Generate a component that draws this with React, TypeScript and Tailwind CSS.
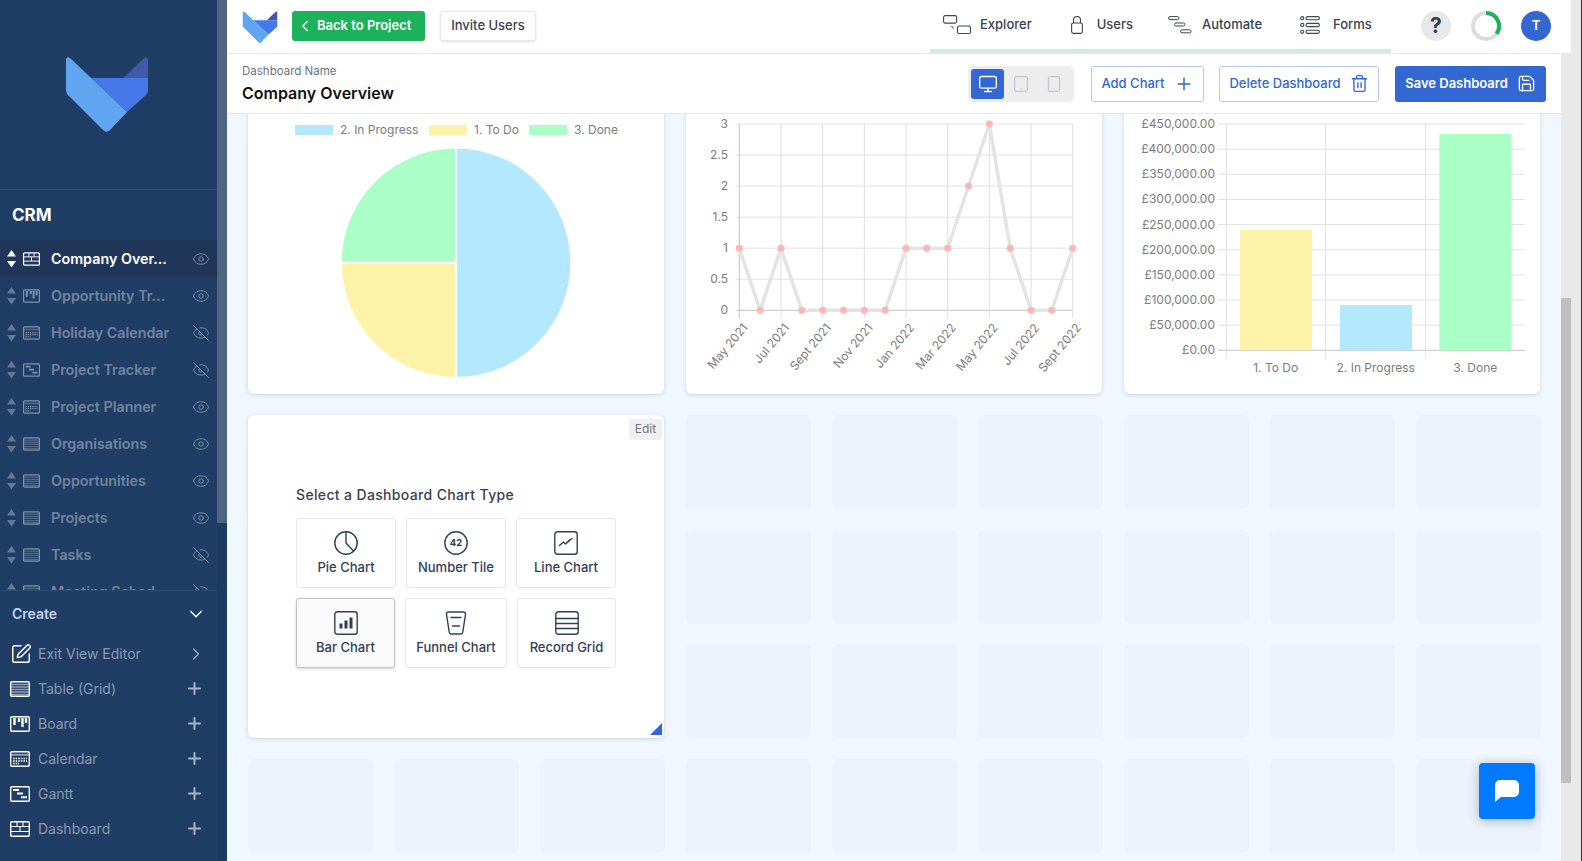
import { ChevronDown, ChevronLeft, ChevronRight, Eye, EyeOff, Monitor, Plus, Save, SquarePen, Trash2 } from "lucide-react";

function Logo({ className }: { className: string }) {
  return (
    <svg viewBox="0 0 82 76" className={className}>
      <path d="M57 22 L77 3 Q82 -1 82 4 L82 22 Z" fill="#3f5aa8" />
      <path d="M25 22 L82 22 L82 34 Q82 37 80 39 L61 56 Z" fill="#4678ea" />
      <path d="M0 4 Q0 0 4 2 L61 56 L45 73 Q41 78 37 74 L2 39 Q0 37 0 34 Z" fill="#60a5f0" />
    </svg>
  );
}

type ViewKind = "dashboard" | "board" | "calendar" | "gantt" | "table";

function ViewIcon({ kind, className }: { kind: ViewKind; className: string }) {
  return (
    <svg viewBox="0 0 20 16" className={className} fill="none" stroke="currentColor">
      <rect x="0.7" y="0.7" width="18.6" height="14.6" rx="1.2" strokeWidth="1.4" />
      {kind === "dashboard" && <path d="M1 5.500h18M7 1v4.500M13 1v4.500M1 10.500h18M10 5.500v5" strokeWidth="1.1" />}
      {kind === "board" && <path d="M4.500 2v7M9 2v4M12.500 2v9M16 2v5" strokeWidth="2.400" />}
      {kind === "calendar" && (
        <>
          <path d="M1 3.800h18" strokeWidth="2" opacity="0.5" />
          <path d="M3 7.500h14M3 10h14" strokeWidth="1.400" strokeDasharray="1.600 1" />
          <path d="M3 12.500h6" strokeWidth="1.400" strokeDasharray="1.600 1" />
        </>
      )}
      {kind === "gantt" && <path d="M3 4h6M7 7.600h6M11 11.200h6" strokeWidth="2" />}
      {kind === "table" && <path d="M1 3.500h18M1 6h18M1 8.500h18M1 11h18M1 13.500h18" strokeWidth="1.400" opacity="0.5" />}
    </svg>
  );
}

function SortArrows({ active }: { active: boolean }) {
  return (
    <svg viewBox="0 0 9 18" className={`w-[9px] h-[18px] ${active ? "text-white" : "text-[#64799a]"}`} fill="currentColor">
      <path d="M4.500 0 L9 6.500 L0 6.500 Z" />
      <path d="M0 11 L9 11 L4.500 17.500 Z" />
    </svg>
  );
}

const views: { name: string; kind: ViewKind; hidden?: boolean }[] = [
  { name: "Company Over...", kind: "dashboard" },
  { name: "Opportunity Tr...", kind: "board" },
  { name: "Holiday Calendar", kind: "calendar", hidden: true },
  { name: "Project Tracker", kind: "gantt", hidden: true },
  { name: "Project Planner", kind: "calendar" },
  { name: "Organisations", kind: "table" },
  { name: "Opportunities", kind: "table" },
  { name: "Projects", kind: "table" },
  { name: "Tasks", kind: "table", hidden: true },
  { name: "Meeting Sched...", kind: "calendar", hidden: true },
];

const createItems: { name: string; kind: ViewKind }[] = [
  { name: "Table (Grid)", kind: "table" },
  { name: "Board", kind: "board" },
  { name: "Calendar", kind: "calendar" },
  { name: "Gantt", kind: "gantt" },
  { name: "Dashboard", kind: "dashboard" },
];

function Sidebar() {
  return (
    <aside className="w-[227px] h-full shrink-0 flex bg-[#203e65]">
      <div className="w-[217px] h-full flex flex-col">
        <div className="h-[590px] shrink-0 overflow-hidden">
          <div className="h-[190px] pl-[66px] pt-[56px] border-b border-[#2c4a74]">
            <Logo className="w-[82px] h-[76px]" />
          </div>
          <div className="h-[50px] flex items-center pl-[12px] pt-[2px] text-[17px] font-bold text-white">CRM</div>
          {views.map((v, i) => {
            const active = i === 0;
            const Vis = v.hidden ? EyeOff : Eye;
            return (
              <div key={v.name} className={`h-[37px] flex items-center pl-[7px] pr-[7px] ${active ? "bg-[#1f3658]" : ""}`}>
                <SortArrows active={active} />
                <ViewIcon kind={v.kind} className={`ml-[7px] w-[17px] h-[14px] ${active ? "text-white" : "text-[#8093ad]"}`} />
                <span className={`ml-[11px] whitespace-nowrap text-[14.300px] font-semibold ${active ? "text-white" : "text-[#71849f]"}`}>{v.name}</span>
                <Vis strokeWidth={1.200} className="ml-auto w-[18px] h-[18px] text-[#8093ad]" />
              </div>
            );
          })}
        </div>
        <div className="flex-1 border-t border-[#2c4a74]">
          <div className="h-[45px] flex items-center pl-[12px] pr-[10px] justify-between text-[14px] font-semibold text-[#c2d1e5]">
            Create
            <ChevronDown strokeWidth={1.500} className="w-[22px] h-[22px] text-white" />
          </div>
          <div className="h-[35px] flex items-center pl-[10px] pr-[11px] text-[14px] text-[#8a9ab2]">
            <SquarePen strokeWidth={1.600} className="w-[22px] h-[22px] text-white" />
            <span className="ml-[6px]">Exit View Editor</span>
            <ChevronRight strokeWidth={1.500} className="ml-auto w-[20px] h-[20px] text-[#9fb0c6]" />
          </div>
          {createItems.map((c) => (
            <div key={c.name} className="h-[35px] flex items-center pl-[10px] pr-[13px] text-[14px] text-[#8a9ab2]">
              <ViewIcon kind={c.kind} className="w-[20px] h-[16px] text-white" />
              <span className="ml-[8px]">{c.name}</span>
              <Plus strokeWidth={2.500} className="ml-auto w-[19px] h-[19px] text-[#a5b4c8]" />
            </div>
          ))}
        </div>
      </div>
      <div className="w-[10px] h-full bg-[#1f3a60]">
        <div className="h-[523px] bg-[#4f6682]" />
      </div>
    </aside>
  );
}

function NavIcon({ kind }: { kind: string }) {
  if (kind === "Explorer")
    return (
      <svg viewBox="0 0 28 20" className="w-[28px] h-[20px]" fill="none" stroke="#3b4654" strokeWidth="1.100">
        <rect x="0.6" y="0.6" width="13" height="7.500" rx="1.500" />
        <rect x="14.500" y="11" width="13" height="7.500" rx="1.500" />
        <path d="M8.500 11 l2 2.500" />
      </svg>
    );
  if (kind === "Users")
    return (
      <svg viewBox="0 0 12 18" className="w-[12px] h-[18px]" fill="none" stroke="#3b4654" strokeWidth="1.100">
        <rect x="0.6" y="7" width="10.800" height="10.400" rx="1.800" />
        <path d="M2.500 7V4a3.500 3.500 0 0 1 7 0v3" />
      </svg>
    );
  if (kind === "Automate")
    return (
      <svg viewBox="0 0 24 18" className="w-[24px] h-[18px]" fill="none" stroke="#3b4654" strokeWidth="1">
        <rect x="0.5" y="0.6" width="10.500" height="3" rx="1.500" />
        <rect x="6.500" y="7" width="10.500" height="3" rx="1.500" />
        <rect x="12.500" y="13.800" width="10.500" height="3" rx="1.500" />
      </svg>
    );
  return (
    <svg viewBox="0 0 20 18" className="w-[20px] h-[18px]" fill="none" stroke="#3b4654" strokeWidth="1.100">
      <circle cx="2.200" cy="2.200" r="1.600" />
      <circle cx="2.200" cy="9" r="1.600" />
      <circle cx="2.200" cy="15.800" r="1.600" />
      <rect x="6" y="0.6" width="13.400" height="3.200" rx="1.600" />
      <rect x="6" y="7.400" width="13.400" height="3.200" rx="1.600" />
      <rect x="6" y="14.200" width="13.400" height="3.200" rx="1.600" />
    </svg>
  );
}

function TopBar() {
  return (
    <div className="h-[54px] shrink-0 bg-white border-b border-[#e5e7eb] flex items-center pl-[15px] pr-[20px]">
      <Logo className="w-[36px] h-[32px]" />
      <button className="ml-[14px] -mt-[1px] h-[30px] w-[133px] rounded-[3px] bg-[#1cb25c] text-white text-[13px] font-semibold flex items-center pl-[4px]">
        <ChevronLeft strokeWidth={2} className="w-[18px] h-[18px] mr-[3px]" />
        Back to Project
      </button>
      <button className="ml-[15px] -mt-[1px] h-[30px] w-[96px] rounded-[3px] bg-white border border-[#e5e7eb] shadow-sm text-[13px] font-medium text-[#374151]">Invite Users</button>
      <nav className="ml-[394px] w-[461px] h-[53px] self-start border-b-4 border-[#d1ecdd] flex items-center pl-[13px] text-[13px] font-medium text-[#374151]">
        <NavIcon kind="Explorer" />
        <span className="ml-[9px]">Explorer</span>
        <span className="ml-[39px]"><NavIcon kind="Users" /></span>
        <span className="ml-[14px]">Users</span>
        <span className="ml-[35px]"><NavIcon kind="Automate" /></span>
        <span className="ml-[10px]">Automate</span>
        <span className="ml-[38px]"><NavIcon kind="Forms" /></span>
        <span className="ml-[13px]">Forms</span>
      </nav>
      <div className="ml-[30px] -mt-[1px] w-[30px] h-[30px] rounded-full bg-[#e8e8e8] flex items-center justify-center text-[21px] font-bold text-[#3a3f47]">?</div>
      <svg viewBox="0 0 30 30" className="ml-[20px] -mt-[1px] w-[30px] h-[30px]" fill="none" strokeWidth="4">
        <circle cx="15" cy="15" r="13" stroke="#dcdcdc" />
        <path d="M15 2 A13 13 0 0 1 25.500 22.700" stroke="#1cb25c" />
      </svg>
      <div className="ml-[20px] -mt-[1px] w-[30px] h-[30px] rounded-full bg-[#3367d1] flex items-center justify-center text-[13px] font-semibold text-white">T</div>
    </div>
  );
}

function TabletGlyph({ narrow }: { narrow?: boolean }) {
  return (
    <svg viewBox="0 0 14 16" className="w-[14px] h-[16px]" fill="none" stroke="#c4c8ce" strokeWidth="1.300">
      <rect x={narrow ? 1.500 : 0.7} y="0.7" width={narrow ? 11 : 12.600} height="14.600" rx="1.500" />
      <circle cx="7" cy="12.300" r="0.6" fill="#c4c8ce" stroke="none" />
    </svg>
  );
}

function DashboardBar() {
  return (
    <div className="h-[60px] shrink-0 bg-white border-b border-[#e5e7eb] flex items-center pl-[15px] pr-[15px]">
      <div>
        <div className="text-[11.500px] leading-[16px] text-[#6b7280]">Dashboard Name</div>
        <div className="mt-[3px] text-[16px] leading-[22px] font-semibold text-[#111]">Company Overview</div>
      </div>
      <div className="ml-auto w-[106px] h-[36px] rounded-[6px] bg-[#ededed] flex items-center pl-[3px]">
        <div className="w-[33px] h-[30px] rounded-[3px] bg-[#3367d1] flex items-center justify-center">
          <Monitor strokeWidth={1.600} className="w-[20px] h-[20px] text-white" />
        </div>
        <div className="ml-[10px]"><TabletGlyph /></div>
        <div className="ml-[19px]"><TabletGlyph narrow /></div>
      </div>
      <button className="ml-[17px] w-[113px] h-[36px] rounded-[3px] bg-white border border-[#b7c8f0] flex items-center justify-center gap-[9px] text-[13px] font-medium text-[#3367d1]">
        Add Chart
        <Plus strokeWidth={1.800} className="w-[20px] h-[20px]" />
      </button>
      <button className="ml-[15px] w-[160px] h-[36px] rounded-[3px] bg-white border border-[#b7c8f0] flex items-center justify-center gap-[9px] text-[13px] font-medium text-[#3367d1]">
        Delete Dashboard
        <Trash2 strokeWidth={1.700} className="w-[19px] h-[19px]" />
      </button>
      <button className="ml-[16px] w-[151px] h-[36px] rounded-[3px] bg-[#3367d1] flex items-center justify-center gap-[9px] text-[13px] font-semibold text-white">
        Save Dashboard
        <Save strokeWidth={1.700} className="w-[19px] h-[19px]" />
      </button>
    </div>
  );
}

const tickText = { fontFamily: "Inter, sans-serif", fontSize: 12, fill: "#7c7c7c" };

function PieCard() {
  const legend = [
    { x: 295, c: "#b3e8ff", t: "2. In Progress" },
    { x: 429, c: "#fef3a8", t: "1. To Do" },
    { x: 529, c: "#aaffc7", t: "3. Done" },
  ];
  return (
    <svg viewBox="248 71 416 323" className="w-[416px] h-[323px]">
      {legend.map((l) => (
        <g key={l.t}>
          <rect x={l.x} y="125" width="38" height="10" fill={l.c} />
          <text x={l.x + 45} y="134" {...tickText}>{l.t}</text>
        </g>
      ))}
      <path d="M456 262.700 V147.400 A115.300 115.300 0 0 1 456 378 Z" fill="#b3e8ff" stroke="#fff" strokeWidth="2" />
      <path d="M456 262.700 V378 A115.300 115.300 0 0 1 340.700 262.700 Z" fill="#fef3a8" stroke="#fff" strokeWidth="2" />
      <path d="M456 262.700 H340.700 A115.300 115.300 0 0 1 456 147.400 Z" fill="#aaffc7" stroke="#fff" strokeWidth="2" />
    </svg>
  );
}

function LineCard() {
  const values = [1, 0, 1, 0, 0, 0, 0, 0, 1, 1, 1, 2, 3, 1, 0, 0, 1];
  const x0 = 739.300;
  const step = 20.840;
  const y0 = 310.300;
  const unit = 62.100;
  const xLabels = ["May 2021", "Jul 2021", "Sept 2021", "Nov 2021", "Jan 2022", "Mar 2022", "May 2022", "Jul 2022", "Sept 2022"];
  const yLabels = ["0", "0.5", "1", "1.5", "2", "2.5", "3"];
  const pts = values.map((v, i) => ({ x: x0 + i * step, y: y0 - v * unit }));
  return (
    <svg viewBox="686 71 416 323" className="w-[416px] h-[323px]">
      {yLabels.map((t, i) => {
        const y = y0 - (i * unit) / 2;
        return (
          <g key={t}>
            <line x1={x0 - 3} x2={x0 + 16 * step} y1={y} y2={y} stroke={i === 0 ? "#c4c4c4" : "#e2e2e2"} />
            <text x="728" y={y + 4} textAnchor="end" {...tickText}>{t}</text>
          </g>
        );
      })}
      {xLabels.map((t, i) => {
        const x = x0 + i * 2 * step;
        return (
          <g key={t}>
            <line x1={x} x2={x} y1="124" y2={y0 + 8} stroke={i === 0 ? "#c4c4c4" : "#dedede"} />
            <text x={x + 9} y="328" textAnchor="end" transform={`rotate(-50 ${x + 9} 328)`} {...tickText}>{t}</text>
          </g>
        );
      })}
      <polyline points={pts.map((p) => `${p.x},${p.y}`).join(" ")} fill="none" stroke="#e4e4e4" strokeWidth="3.500" />
      {pts.map((p, i) => (
        <circle key={i} cx={p.x} cy={p.y} r="3.300" fill="#ffb4b4" stroke="#f3c3c3" />
      ))}
    </svg>
  );
}

function BarCard() {
  const yLabels = ["£0.00", "£50,000.00", "£100,000.00", "£150,000.00", "£200,000.00", "£250,000.00", "£300,000.00", "£350,000.00", "£400,000.00", "£450,000.00"];
  const y0 = 350.300;
  const unit = 25.140;
  const bars = [
    { x: 1240, top: 230, c: "#fef3a8", t: "1. To Do", cx: 1275.700, gx: 1226.300 },
    { x: 1340, top: 305, c: "#b3e8ff", t: "2. In Progress", cx: 1375.700, gx: 1325.700 },
    { x: 1439.300, top: 134, c: "#aaffc7", t: "3. Done", cx: 1475.300, gx: 1425.700 },
  ];
  return (
    <svg viewBox="1124 71 416 323" className="w-[416px] h-[323px]">
      {yLabels.map((t, i) => {
        const y = y0 - i * unit;
        return (
          <g key={t}>
            <line x1="1218" x2="1525" y1={y} y2={y} stroke={i === 0 ? "#c4c4c4" : "#e2e2e2"} />
            <text x="1215" y={y + 4} textAnchor="end" {...tickText}>{t}</text>
          </g>
        );
      })}
      {bars.map((b) => (
        <g key={b.t}>
          <line x1={b.gx} x2={b.gx} y1="124" y2="358" stroke="#e0e0e0" />
          <rect x={b.x} y={b.top} width="72" height={y0 - b.top} fill={b.c} />
          <text x={b.cx} y="372" textAnchor="middle" {...tickText}>{b.t}</text>
        </g>
      ))}
    </svg>
  );
}

function ChartGlyph({ kind }: { kind: string }) {
  return (
    <svg viewBox="0 0 24 24" className="w-[24px] h-[24px]" fill="none" stroke="#2f4057" strokeWidth="1.400" strokeLinecap="round" strokeLinejoin="round">
      {kind === "Pie Chart" && (
        <>
          <circle cx="12" cy="12" r="11.200" />
          <path d="M12 1v11l7.500 8" />
        </>
      )}
      {kind === "Number Tile" && (
        <>
          <circle cx="12" cy="12" r="11.200" />
          <text x="12" y="15.300" textAnchor="middle" fontSize="9.500" fontWeight="700" fontFamily="Inter, sans-serif" fill="#2f4057" stroke="none">42</text>
        </>
      )}
      {kind === "Line Chart" && (
        <>
          <rect x="0.8" y="0.8" width="22.400" height="22.400" rx="2.500" />
          <path d="M5.500 14.500l4-3.500 2 2 4.500-4.500M13.500 11.500l2.500-2.500 2 -1.500" />
        </>
      )}
      {kind === "Bar Chart" && (
        <>
          <rect x="0.8" y="0.8" width="22.400" height="22.400" rx="2.500" />
          <path d="M7 12.500v5M12 9.500v8M17 6.500v11" strokeWidth="3" strokeLinecap="butt" />
        </>
      )}
      {kind === "Funnel Chart" && (
        <>
          <path d="M4.500 1h15a2 2 0 0 1 2 2.400L18.800 21a2.200 2.200 0 0 1-2.100 2H7.300a2.200 2.200 0 0 1-2.100-2L2.500 3.400a2 2 0 0 1 2-2.400z" />
          <path d="M7 6.500h10M8.500 15h7" />
        </>
      )}
      {kind === "Record Grid" && (
        <>
          <rect x="0.8" y="0.8" width="22.400" height="22.400" rx="2.500" />
          <path d="M1 7.500h22M1 12.500h22M1 17.500h22" />
        </>
      )}
    </svg>
  );
}

function TypeButton({ label, w, selected }: { label: string; w: string; selected?: boolean }) {
  return (
    <div className={`${w} h-[70px] rounded-[3px] border flex flex-col items-center pt-[12px] ${selected ? "bg-[#fafafa] border-[#c4c4c4] shadow-[0_1px_3px_rgba(0,0,0,0.18)]" : "bg-white border-[#e5e7eb]"}`}>
      <ChartGlyph kind={label} />
      <span className="mt-[2px] text-[13px] leading-[20px] font-medium text-[#2f4057]">{label}</span>
    </div>
  );
}

function SelectCard() {
  return (
    <div className="relative h-full pl-[48px] pt-[68px]">
      <div className="absolute top-[4px] right-[2px] w-[33px] h-[21px] bg-[#f0f0f0] rounded-[2px] flex items-center justify-center text-[12px] text-[#777]">Edit</div>
      <div className="text-[14px] leading-[24px] font-medium tracking-[0.35px] text-[#374151]">Select a Dashboard Chart Type</div>
      <div className="mt-[11px] flex gap-[10px]">
        <TypeButton label="Pie Chart" w="w-[100px]" />
        <TypeButton label="Number Tile" w="w-[100px]" />
        <TypeButton label="Line Chart" w="w-[100px]" />
      </div>
      <div className="mt-[10px] flex gap-[10px]">
        <TypeButton label="Bar Chart" w="w-[99px]" selected />
        <TypeButton label="Funnel Chart" w="w-[102px]" />
        <TypeButton label="Record Grid" w="w-[99px]" />
      </div>
      <svg viewBox="0 0 12 12" className="absolute right-[2px] bottom-[3px] w-[12px] h-[12px]">
        <path d="M12 0V12H0Z" fill="#3367d1" />
      </svg>
    </div>
  );
}

function Card({ children }: { children: React.ReactNode }) {
  return <div className="col-span-3 row-span-3 w-[416px] rounded-[6px] bg-white shadow-[0_1px_4px_rgba(30,50,90,0.18)] overflow-hidden">{children}</div>;
}

function Tile() {
  return <div className="rounded-[6px] bg-[#ecf3fb]" />;
}

function Canvas() {
  return (
    <div className="flex-1 overflow-hidden bg-[#f1f7ff] pl-[21px]">
      <div className="-mt-[43px] grid grid-cols-[repeat(9,125px)] auto-rows-[94px] gap-x-[21px] gap-y-[20.670px]">
        <Card><PieCard /></Card>
        <Card><LineCard /></Card>
        <Card><BarCard /></Card>
        <Card><SelectCard /></Card>
        {Array.from({ length: 18 }).map((_, i) => <Tile key={i} />)}
        {Array.from({ length: 9 }).map((_, i) => <Tile key={i} />)}
      </div>
    </div>
  );
}

export default function App() {
  return (
    <div className="relative w-[1582px] h-[861px] flex overflow-hidden bg-[#e9e9e9] [font-family:Inter,sans-serif]">
      <Sidebar />
      <div className="w-[1344px] h-full flex flex-col">
        <TopBar />
        <div className="flex-1 min-h-0 flex">
          <div className="w-[1334px] h-full flex flex-col">
            <DashboardBar />
            <Canvas />
          </div>
          <div className="w-[10px] h-full pt-[244px]">
            <div className="h-[485px] bg-[#bfbfbf]" />
          </div>
        </div>
      </div>
      <div className="w-[10px] h-full" />
      <div className="w-[1px] h-full bg-[#333]" />
      <button className="absolute left-[1479px] top-[763px] w-[56px] h-[56px] rounded-[4px] bg-[#007bff] shadow-[0_2px_12px_rgba(20,40,90,0.3)] flex items-center justify-center">
        <svg viewBox="0 0 24 22" className="w-[24px] h-[22px]">
          <path d="M5 0h14a5 5 0 0 1 5 5v7a5 5 0 0 1-5 5H6l-6 5V5a5 5 0 0 1 5-5z" fill="#fff" />
        </svg>
      </button>
    </div>
  );
}
